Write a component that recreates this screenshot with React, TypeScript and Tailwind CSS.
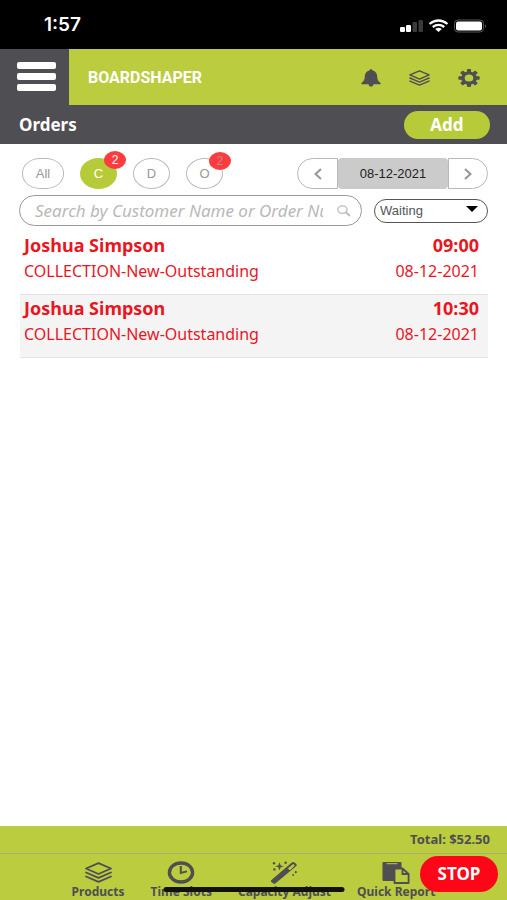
import React from "react";

const notoSans = "font-['Noto_Sans',sans-serif]";
const liberation = "font-['Liberation_Sans',sans-serif]";

function Layers({ className, weight }: { className: string; weight: number }) {
  return (
    <svg viewBox="0 0 26 20" className={className} fill="none" stroke="currentColor" strokeWidth={weight} strokeLinejoin="round" strokeLinecap="round" aria-hidden="true">
      <path d="M13 1 L25 6.2 L13 11.4 L1 6.2 Z" />
      <path d="M1 10 L13 15.2 L25 10" />
      <path d="M1 13.8 L13 19 L25 13.8" />
    </svg>
  );
}

function Bell() {
  return (
    <svg viewBox="0 0 20 18" className="h-[18px] w-5" fill="currentColor" aria-hidden="true">
      <path d="M10 0.3 C11 0.3 11.6 0.9 11.6 1.6 C14.8 2.4 16 4.6 16.2 7.5 C16.4 10.8 17.2 12.3 19.6 14 V15.2 H0.4 V14 C2.8 12.3 3.6 10.8 3.8 7.5 C4 4.6 5.2 2.4 8.4 1.6 C8.4 0.9 9 0.3 10 0.3 Z" />
      <path d="M7.5 15 H12.5 C12.3 16.9 11.3 17.6 10 17.6 C8.7 17.6 7.7 16.9 7.5 15 Z" />
    </svg>
  );
}

function Gear() {
  return (
    <svg viewBox="0 0 22 18" className="h-[18px] w-[22px]" aria-hidden="true">
      <g transform="translate(11 9) scale(1.2 1)" fill="currentColor">
        <path fillRule="evenodd" d="M0 -6.6 A6.6 6.6 0 1 1 0 6.6 A6.6 6.6 0 1 1 0 -6.6 Z M0 -3.6 A3.6 3.6 0 1 0 0 3.6 A3.6 3.6 0 1 0 0 -3.6 Z" />
        {[0, 45, 90, 135, 180, 225, 270, 315].map((angle) => (
          <rect key={angle} x="-1.7" y="-8.9" width="3.4" height="3.4" rx="0.8" transform={`rotate(${angle})`} />
        ))}
      </g>
    </svg>
  );
}

function Clock() {
  return (
    <svg viewBox="0 0 28 23" className="h-[23px] w-7" fill="none" stroke="currentColor" aria-hidden="true">
      <ellipse cx="14" cy="11.5" rx="11.6" ry="9.5" strokeWidth="3.4" />
      <path d="M13.8 5 V12 L20 10.4" strokeWidth="2" />
    </svg>
  );
}

function Wand() {
  return (
    <svg viewBox="0 0 28 23" className="h-[23px] w-7" fill="currentColor" aria-hidden="true">
      <path fillRule="evenodd" d="M1.2 19.2 L21.8 1.4 Q23.2 0.4 24.6 1.5 L26.2 2.9 Q27.4 4 26 5.2 L5.6 22.2 Q4.2 23.2 3 22.2 L1.3 20.9 Q0.5 20 1.2 19.2 Z M17.8 7.6 L20 9.3 L24.8 4.4 L23.2 3 Z" />
      <path d="M9.5 1.2 L10.7 4.4 L14 5.3 L10.7 6.2 L9.5 9.4 L8.3 6.2 L5 5.3 L8.3 4.4 Z" />
      <circle cx="4" cy="2.2" r="1.2" />
      <circle cx="4.4" cy="8.4" r="1.2" />
      <circle cx="15.6" cy="1.8" r="1.2" />
      <circle cx="25.8" cy="11.2" r="1.1" />
      <circle cx="23.2" cy="14" r="0.9" />
    </svg>
  );
}

function Report() {
  return (
    <svg viewBox="0 0 28 23" className="h-[23px] w-7" aria-hidden="true">
      <path d="M1.5 1 H18.5 Q19.5 1 19.5 2 V8 H12 V20 H1.5 Q0.5 20 0.5 19 V2 Q0.5 1 1.5 1 Z" fill="currentColor" />
      <path d="M4.5 2.7 H15.5" stroke="#bbcc3f" strokeWidth="1" />
      <path d="M12.5 7.5 H20.5 L26.6 13 V22 H12.5 Z" fill="#bbcc3f" stroke="currentColor" strokeWidth="1.8" strokeLinejoin="round" />
      <path d="M20.5 7.5 V13 H26.6" fill="none" stroke="currentColor" strokeWidth="1.8" />
    </svg>
  );
}

function StatusBar() {
  return (
    <div className="flex h-[49px] items-center justify-between bg-black pr-5 pl-11 pt-[2px] text-white">
      <span className="font-['Inter',sans-serif] text-[19px] font-semibold">1:57</span>
      <svg viewBox="0 0 87 14" className="h-[14px] w-[87px]" aria-hidden="true">
        <rect x="0" y="8" width="5" height="5" rx="1.2" fill="#fff" />
        <rect x="6" y="6" width="5" height="7" rx="1.2" fill="#fff" />
        <rect x="12.5" y="3" width="4.5" height="10" rx="1.2" fill="#3a3a3a" />
        <rect x="18.5" y="1" width="4.5" height="12" rx="1.2" fill="#3a3a3a" />
        <g fill="none" stroke="#fff" strokeWidth="2.2">
          <path d="M29.5 5 Q38.5 -2 47.5 5" />
          <path d="M32.7 8 Q38.5 3.6 44.3 8" />
        </g>
        <path d="M35.2 10 Q38.5 7.6 41.8 10 L38.5 13 Z" fill="#fff" />
        <rect x="54.5" y="1" width="29" height="12" rx="3.5" fill="none" stroke="#555" />
        <rect x="56" y="2.5" width="26" height="9" rx="2" fill="#fff" />
        <path d="M85 5 Q87 7 85 9 Z" fill="#555" />
      </svg>
    </div>
  );
}

const filters = [
  { label: "All", count: "", shape: "w-[42px] rounded-[18px/15px] border border-[#b9b9b9] text-[#999]", badge: "" },
  { label: "C", count: "2", shape: "w-[37px] rounded-[50%] bg-[#b7cb39] text-white", badge: "-top-[7px] left-6 text-white" },
  { label: "D", count: "", shape: "w-[37px] rounded-[50%] border border-[#b9b9b9] text-[#999]", badge: "" },
  { label: "O", count: "2", shape: "w-[37px] rounded-[50%] border border-[#b9b9b9] text-[#999]", badge: "-top-[7px] left-[22px] text-[#b98a8a]" },
];

const orders = [
  { name: "Joshua Simpson", time: "09:00", detail: "COLLECTION-New-Outstanding", date: "08-12-2021" },
  { name: "Joshua Simpson", time: "10:30", detail: "COLLECTION-New-Outstanding", date: "08-12-2021" },
];

const tabs = [
  { label: "Products", icon: <Layers className="my-[1px] h-[21px] w-[27px]" weight={1.7} /> },
  { label: "Time Slots", icon: <Clock /> },
  { label: "Capacity Adjust", icon: <Wand /> },
  { label: "Quick Report", icon: <Report /> },
];

export default function App() {
  return (
    <div className={`relative flex min-h-screen flex-col bg-white ${notoSans}`}>
      <StatusBar />

      <header className="flex h-14 items-stretch bg-[#bbcc3f] text-[#4f4e53]">
        <button type="button" aria-label="Menu" className="flex w-[69px] flex-col items-center gap-1 bg-[#4f4e53] pt-[13px] pl-1">
          <span className="h-[7px] w-[39px] rounded-xs bg-white" />
          <span className="h-[7px] w-[39px] rounded-xs bg-white" />
          <span className="h-[7px] w-[39px] rounded-xs bg-white" />
        </button>
        <div className="flex flex-1 items-center justify-between pt-[2px] pr-[27px] pl-[19px]">
          <span className="font-['Roboto',sans-serif] text-base font-bold text-white">BOARDSHAPER</span>
          <div className="flex items-center gap-7">
            <button type="button" aria-label="Notifications"><Bell /></button>
            <button type="button" aria-label="Products"><Layers className="h-4 w-[21px]" weight={1.8} /></button>
            <button type="button" aria-label="Settings"><Gear /></button>
          </div>
        </div>
      </header>

      <div className="flex h-[39px] items-center justify-between bg-[#4f4e53] pr-[17px] pl-[19px] text-white">
        <h1 className="text-[17px] font-bold">Orders</h1>
        <button type="button" className="h-7 w-[86px] rounded-full bg-[#b7cb39] text-[17px] leading-7 font-bold">Add</button>
      </div>

      <main className="flex-1 px-[19px] pt-[14px]">
        <div className={`flex items-center justify-between text-[13px] ${liberation}`}>
          <div className="flex gap-4 pl-[3px]">
            {filters.map((f) => (
              <button key={f.label} type="button" className={`relative h-[31px] ${f.shape}`}>
                {f.label}
                {f.count && (
                  <span className={`absolute flex h-[18px] w-[22px] items-center justify-center rounded-[50%] bg-[#fd3c3f] text-xs ${f.badge}`}>{f.count}</span>
                )}
              </button>
            ))}
          </div>
          <div className="flex h-[31px]">
            <button type="button" aria-label="Previous day" className="flex w-[41px] items-center justify-center rounded-l-full border border-[#b9b9b9] text-[#999]">
              <svg viewBox="0 0 8 12" className="h-3 w-2" fill="none" stroke="currentColor" strokeWidth="2.2" aria-hidden="true"><path d="M7 1 L1.5 6 L7 11" /></svg>
            </button>
            <button type="button" className="w-[110px] rounded-sm bg-[#cbcbcb] text-[#222]">08-12-2021</button>
            <button type="button" aria-label="Next day" className="flex w-10 items-center justify-center rounded-r-full border border-[#b9b9b9] text-[#999]">
              <svg viewBox="0 0 8 12" className="h-3 w-2" fill="none" stroke="currentColor" strokeWidth="2.2" aria-hidden="true"><path d="M1 1 L6.5 6 L1 11" /></svg>
            </button>
          </div>
        </div>

        <div className="mt-[6px] flex items-start gap-3">
          <label className="flex h-[31px] min-w-0 flex-1 items-center rounded-full border border-[#999] pr-[10px] pl-[15px]">
            <input type="text" aria-label="Search orders" placeholder="Search by Customer Name or Order Number" className="min-w-0 flex-1 text-[17px] leading-6 italic outline-none placeholder:text-[#b9b9b9]" />
            <svg viewBox="0 0 14 12" className="ml-[14px] h-3 w-[14px]" fill="none" stroke="#bbb" aria-hidden="true">
              <ellipse cx="5.5" cy="4.6" rx="4.6" ry="3.8" strokeWidth="1.3" />
              <path d="M8.8 7.3 L13 11" strokeWidth="1.8" />
            </svg>
          </label>
          <div className="relative mt-[2px] w-[114px]">
            <select aria-label="Order status" className={`h-6 w-full appearance-none rounded-full border border-[#555] bg-white pl-[5px] text-[13px] text-[#555] ${liberation}`}>
              <option>Waiting</option>
            </select>
            <svg viewBox="0 0 12 6" className="pointer-events-none absolute top-[9px] right-[10px] h-[6px] w-3" aria-hidden="true"><path d="M0 0 H12 L6 6 Z" fill="#000" /></svg>
          </div>
        </div>

        <ul className="mt-[6px] ml-[1px]">
          {orders.map((o) => (
            <li key={o.time} className="border-b border-[#e2e2e2] px-1 pr-[9px] pb-[10px] text-[#e9161f] even:bg-[#f4f4f4]">
              <div className="flex justify-between text-lg leading-[26px] font-bold">
                <span>{o.name}</span>
                <span>{o.time}</span>
              </div>
              <div className="flex justify-between text-base leading-[26px]">
                <span>{o.detail}</span>
                <span>{o.date}</span>
              </div>
            </li>
          ))}
        </ul>
      </main>

      <footer className="relative bg-[#bbcc3f] font-bold text-[#4f4e53]">
        <div className="h-7 border-b border-[#a9ad78] pr-[17px] text-right text-[13px] leading-[27px]">Total: $52.50</div>
        <nav className="flex h-[46px] justify-center gap-[26px] pt-[7px]">
          {tabs.map((t) => (
            <a key={t.label} href="#" className="flex flex-col items-center text-xs leading-4 whitespace-nowrap">
              {t.icon}
              {t.label}
            </a>
          ))}
        </nav>
        <div className="absolute bottom-2 left-1/2 h-[5px] w-[181px] -translate-x-1/2 rounded-full bg-[#111]" />
        <button type="button" className="absolute right-[9px] bottom-2 h-9 w-[78px] rounded-full bg-[#fd0618] text-[17px] font-bold text-white">STOP</button>
      </footer>
    </div>
  );
}
